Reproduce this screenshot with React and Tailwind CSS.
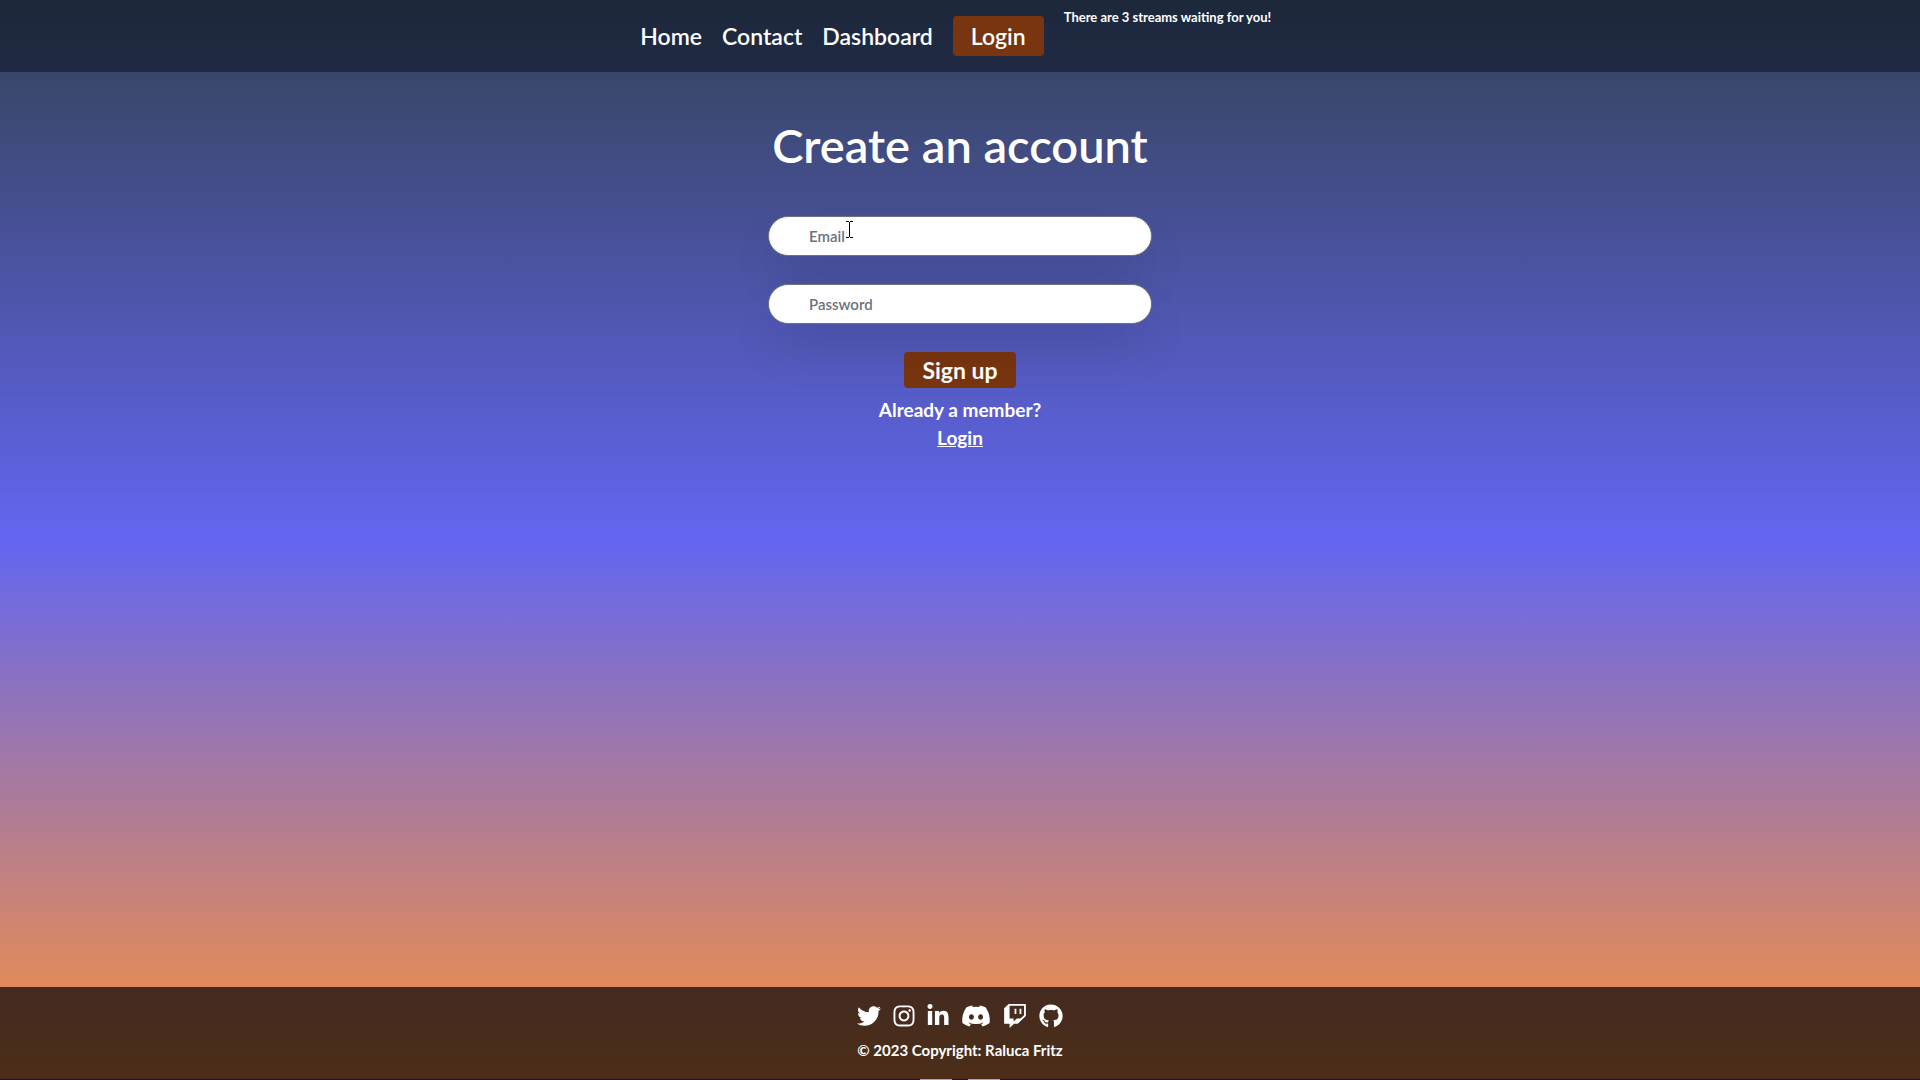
import React from "react";
import { FaTwitter, FaInstagram, FaLinkedinIn, FaDiscord, FaTwitch, FaGithub } from "react-icons/fa";

const navLinks = ["Home", "Contact", "Dashboard"];

const socials = [
  { label: "Twitter", Icon: FaTwitter, size: "w-6" },
  { label: "Instagram", Icon: FaInstagram, size: "w-[22px]" },
  { label: "LinkedIn", Icon: FaLinkedinIn, size: "w-[22px]" },
  { label: "Discord", Icon: FaDiscord, size: "w-[30px]" },
  { label: "Twitch", Icon: FaTwitch, size: "w-6" },
  { label: "GitHub", Icon: FaGithub, size: "w-6" },
];

function Header() {
  return (
    <header className="flex h-[72px] justify-center bg-[#0f172a]/60">
      <nav className="flex items-center gap-5 text-[23px] font-semibold">
        {navLinks.map((name) => (
          <a key={name} href="#">{name}</a>
        ))}
        <button type="button" className="h-10 rounded bg-[#78350f] px-[18px]">Login</button>
      </nav>
      <p className="ml-5 min-w-[216px] pt-2 text-[13px] leading-[18px] font-bold">There are 3 streams waiting for you!</p>
    </header>
  );
}

function Field({ id, type, label, children }) {
  return (
    <div className="relative">
      <input
        id={id}
        type={type}
        aria-label={label}
        placeholder={label}
        className="block h-10 w-full rounded-full border border-[#6b7280] bg-white px-10 text-[15px] font-semibold text-[#111827] shadow-2xl placeholder:text-[#6b7280]"
      />
      {children}
    </div>
  );
}

function TextCursor() {
  return (
    <svg className="absolute top-[5px] left-[78px] h-[17px] w-[7px]" viewBox="0 0 7 17" fill="none" stroke="#000" shapeRendering="crispEdges" aria-hidden="true">
      <path d="M0 .5H3M4 .5H7M3.5 1V16M0 16.5H3M4 16.5H7" />
    </svg>
  );
}

function SignUp() {
  return (
    <main className="flex grow flex-col items-center pt-12">
      <h1 className="text-[47px] leading-[50px] font-semibold">Create an account</h1>
      <form className="mt-[46px] flex w-full max-w-96 flex-col items-stretch gap-7">
        <Field id="email" type="email" label="Email">
          <TextCursor />
        </Field>
        <Field id="password" type="password" label="Password" />
        <button type="button" className="h-9 self-center rounded bg-[#78350f] px-[18px] text-[23px] leading-9 font-bold">Sign up</button>
      </form>
      <p className="mt-2 text-[19px] leading-7 font-bold">Already a member?</p>
      <a href="#" className="text-[19px] leading-7 font-bold underline">Login</a>
    </main>
  );
}

function Footer() {
  return (
    <footer className="flex h-[93px] flex-col items-center bg-[#020308]/70 pt-[17px]">
      <div className="flex h-6 items-center gap-3">
        {socials.map(({ label, Icon, size }) => (
          <a key={label} href="#" aria-label={label} className={size}>
            <Icon className="h-6 w-full" />
          </a>
        ))}
      </div>
      <p className="mt-[10px] text-[15px] leading-6 font-bold">© 2023 Copyright: Raluca Fritz</p>
      <div className="mt-auto flex h-px w-full justify-center gap-4 bg-[#250f35]">
        <span className="w-8 bg-[#aaa0dc]" />
        <span className="w-8 bg-[#aaa0dc]" />
      </div>
    </footer>
  );
}

export default function App() {
  return (
    <div className="flex min-h-screen flex-col bg-linear-to-b/srgb from-[#334155] via-[#6366f1] to-[#fb923c] font-['Lato','Open_Sans',sans-serif] text-white">
      <Header />
      <SignUp />
      <Footer />
    </div>
  );
}
